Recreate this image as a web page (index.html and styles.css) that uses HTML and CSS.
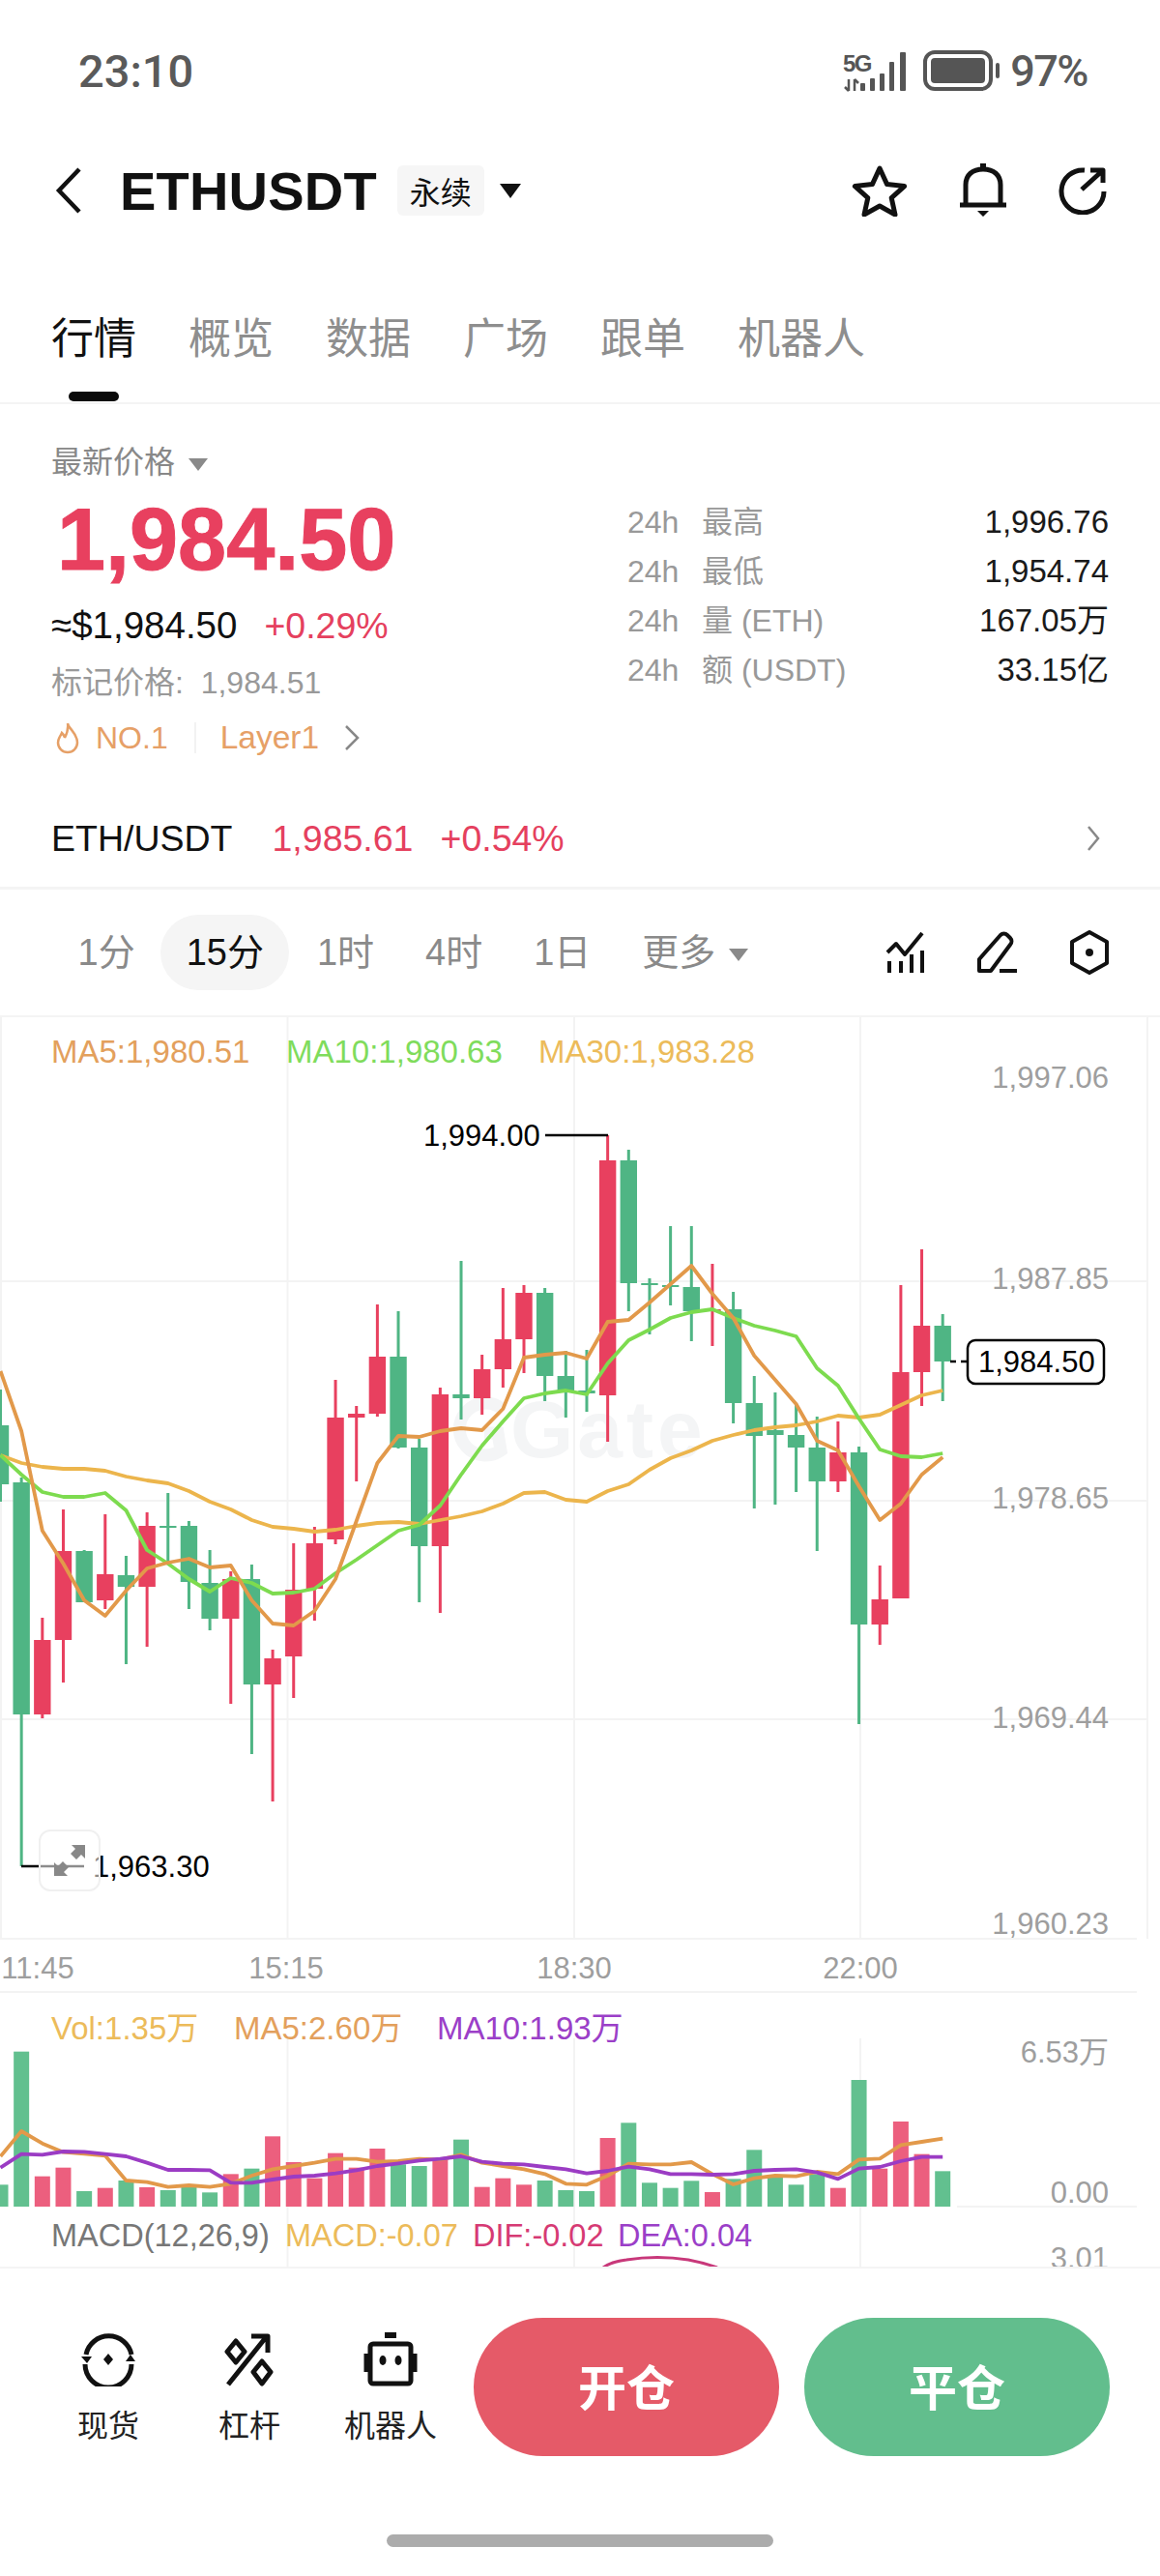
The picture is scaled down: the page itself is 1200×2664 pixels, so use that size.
FILE: index.html
```html
<!DOCTYPE html>
<html lang="zh">

<head>
  <meta charset="utf8">
  <title>ETHUSDT</title>
  <link rel="stylesheet" href="styles.css">
</head>

<body>
  <div class="status">
    <span class="clock">23:10</span>
    <span class="status-right">
      <svg width="166" height="44" viewBox="870 50 166 44">
        <text class="net" x="873" y="73">5G</text>
        <path class="net-arrows" d="M879 81v12M875 89l4 4M885 81v12M885 81l4 4" />
        <rect class="bar" x="891" y="85" width="5" height="8" rx="1" />
        <rect class="bar" x="901" y="80" width="5" height="13" rx="1" />
        <rect class="bar" x="911" y="75" width="5" height="18" rx="1" />
        <rect class="bar" x="921" y="63" width="5" height="30" rx="1" />
        <rect class="bar" x="932" y="53" width="6" height="40" rx="1" />
        <rect class="batt" x="958" y="53" width="68" height="38" rx="10" />
        <rect class="bar" x="964" y="59" width="56" height="26" rx="4" />
        <rect class="bar" x="1031" y="64" width="4" height="16" rx="2" />
      </svg>
      <span class="batt-text">97%</span>
    </span>
  </div>

  <header class="nav">
    <svg class="back" width="30" height="50" viewBox="0 0 30 50">
      <path d="M26 3 5 25l21 22" />
    </svg>
    <span class="symbol">ETHUSDT</span>
    <span class="badge">永续</span>
    <span class="tri tri-dark"></span>
    <span class="nav-icons">
      <svg width="58" height="54" viewBox="0 0 58 54">
        <path class="ico" d="M29 4l7.6 16.6 18 2-13.4 12 3.8 17.4L29 43l-16 9 3.8-17.4-13.4-12 18-2z" />
      </svg>
      <svg width="52" height="56" viewBox="0 0 52 56">
        <path class="ico" d="M8 42V22C8 12 15 6 26 6s18 6 18 16v20" />
        <path class="ico" d="M2 43h48" />
        <path class="ico-fill" d="M20 49h12l-6 6zM23 0h6v6h-6z" />
      </svg>
      <svg width="50" height="50" viewBox="0 0 50 50">
        <path class="ico" d="M27 4A22 22 0 1 0 47 26" />
        <path class="ico" d="M24 24 45 5M33 4h13v13" />
      </svg>
    </span>
  </header>

  <nav class="tabs">
    <div class="tab tab-active">行情<i class="tab-line"></i></div>
    <div class="tab">概览</div>
    <div class="tab">数据</div>
    <div class="tab">广场</div>
    <div class="tab">跟单</div>
    <div class="tab">机器人</div>
  </nav>

  <section class="quote">
    <div class="quote-left">
      <div class="last-label">最新价格<span class="tri tri-gray"></span></div>
      <div class="last-price">1,984.50</div>
      <div class="approx">≈$1,984.50<span class="up">+0.29%</span></div>
      <div class="mark">标记价格:&nbsp; 1,984.51</div>
      <div class="tags">
        <svg width="26" height="34" viewBox="0 0 26 34">
          <path class="flame" d="M13 2c1 6 10 10 10 20a10 10 0 0 1-20 0c0-5 3-7 4-10 2 2 3 3 3 5 2-4 4-9 3-15z" />
        </svg>
        <span class="tag-no">NO.1</span>
        <i class="tag-sep"></i>
        <span class="tag-layer">Layer1</span>
        <svg class="tag-arrow" width="16" height="28" viewBox="0 0 16 28">
          <path d="M2 2l12 12L2 26" />
        </svg>
      </div>
    </div>
    <div class="stats">
      <div class="stat"><span class="h24">24h</span><span class="stat-name">最高</span><span class="stat-val">1,996.76</span></div>
      <div class="stat"><span class="h24">24h</span><span class="stat-name">最低</span><span class="stat-val">1,954.74</span></div>
      <div class="stat"><span class="h24">24h</span><span class="stat-name">量 (ETH)</span><span class="stat-val">167.05万</span></div>
      <div class="stat"><span class="h24">24h</span><span class="stat-name">额 (USDT)</span><span class="stat-val">33.15亿</span></div>
    </div>
  </section>

  <div class="pair">
    <span class="pair-name">ETH/USDT</span>
    <span class="up">1,985.61</span>
    <span class="up">+0.54%</span>
    <svg class="pair-arrow" width="14" height="28" viewBox="0 0 14 28">
      <path d="M2 2l10 12L2 26" />
    </svg>
  </div>

  <div class="periods">
    <span class="period">1分</span>
    <span class="period period-on">15分</span>
    <span class="period">1时</span>
    <span class="period">4时</span>
    <span class="period">1日</span>
    <span class="period">更多<span class="tri tri-gray tri-more"></span></span>
    <span class="tools">
      <svg width="42" height="44" viewBox="0 0 42 44">
        <path class="tool" d="M2 22l9-9 9 11L38 2" />
        <path class="tool" d="M4 43V31M16 43V31M27 43V24M38 43V20" />
      </svg>
      <svg width="44" height="44" viewBox="0 0 44 44">
        <path class="tool" d="M3 41V29L25 4a5 5 0 0 1 7 0l3 3a5 5 0 0 1 0 7L15 41z" />
        <path class="tool" d="M24 41h18" />
      </svg>
      <svg width="42" height="46" viewBox="0 0 42 46">
        <path class="tool" d="M21 2l18 10v22L21 44 3 34V12z" />
        <circle class="tool-dot" cx="21" cy="23" r="4" />
      </svg>
    </span>
  </div>

  <div class="chart">
    <svg class="chart-svg" width="1200" height="1292" viewBox="0 1052 1200 1292">
      <g id="grid"></g>
      <path class="mark-arc" d="M518 1456a27 27 0 1 0 0 44l-3-18h-14" />
      <text class="mark-logo" x="528" y="1507">Gate</text>
      <g id="candles"></g>
      <g id="lines"></g>

      <text class="legend c-ma5" x="53" y="1099">MA5:1,980.51</text>
      <text class="legend c-ma10" x="296" y="1099">MA10:1,980.63</text>
      <text class="legend c-ma30" x="557" y="1099">MA30:1,983.28</text>

      <text class="axis" x="1147" y="1125">1,997.06</text>
      <text class="axis" x="1147" y="1333">1,987.85</text>
      <text class="axis" x="1147" y="1560">1,978.65</text>
      <text class="axis" x="1147" y="1787">1,969.44</text>
      <text class="axis" x="1147" y="2000">1,960.23</text>

      <text class="extreme" x="438" y="1185">1,994.00</text>
      <path class="leader" d="M564 1174h65" />
      <path class="leader" d="M22 1930h65" />
      <text class="extreme" x="96" y="1941">1,963.30</text>

      <rect class="now-box" x="1001" y="1386" width="141" height="45" rx="8" />
      <path class="now-dash" d="M983 1408h17" />
      <text class="extreme" x="1012" y="1419">1,984.50</text>

      <text class="time" x="39" y="2046">11:45</text>
      <text class="time" x="296" y="2046">15:15</text>
      <text class="time" x="594" y="2046">18:30</text>
      <text class="time" x="890" y="2046">22:00</text>

      <text class="legend c-ma30" x="53" y="2109">Vol:1.35万</text>
      <text class="legend c-ma5" x="242" y="2109">MA5:2.60万</text>
      <text class="legend c-ma10v" x="452" y="2109">MA10:1.93万</text>
      <text class="axis" x="1147" y="2133">6.53万</text>
      <text class="axis" x="1147" y="2278">0.00</text>

      <text class="legend legend-macd c-gray" x="53" y="2323">MACD(12,26,9)</text>
      <text class="legend legend-macd c-ma30" x="295" y="2323">MACD:-0.07</text>
      <text class="legend legend-macd c-dif" x="489" y="2323">DIF:-0.02</text>
      <text class="legend legend-macd c-ma10v" x="639" y="2323">DEA:0.04</text>
      <text class="axis" x="1147" y="2346">3.01</text>
      <path class="macd" d="M624 2345q8-6 24-8 32-5 64 0 16 3 30 8" />
    </svg>
    <div class="expand">
      <svg width="34" height="34" viewBox="0 0 34 34">
        <path class="expand-ico" d="M19 1h14v14l-4-4-5 5-6-6 5-5zM1 33V19l4 4 5-5 6 6-5 5 4 4z" />
      </svg>
    </div>
  </div>

  <footer class="bottom">
    <div class="actions">
      <div class="act">
        <svg width="56" height="56" viewBox="0 0 56 56">
          <path class="ico" d="M5 23A24 24 0 0 1 52 23M4 33A24 24 0 0 0 52 33" />
          <path class="ico-fill" d="M0 25h11l-5 7zM46 30h10l-5-7zM28 22l5 6-5 6-5-6z" />
        </svg>
        <span>现货</span>
      </div>
      <div class="act">
        <svg width="56" height="56" viewBox="0 0 56 56">
          <path class="ico" d="M6 54 46 4M30 4h17v17" />
          <path class="ico" d="M14 9l9 11-9 11-9-11zM41 30l9 11-9 12-9-12z" />
        </svg>
        <span>杠杆</span>
      </div>
      <div class="act">
        <svg width="56" height="56" viewBox="0 0 56 56">
          <rect class="ico" x="7" y="12" width="42" height="41" rx="3" />
          <path class="ico" d="M3 22v19M53 22v19" />
          <path class="ico-fill" d="M22 0h12v6H22z" />
          <ellipse class="ico-fill" cx="20" cy="29" rx="3.5" ry="5" />
          <ellipse class="ico-fill" cx="36" cy="29" rx="3.5" ry="5" />
        </svg>
        <span>机器人</span>
      </div>
    </div>
    <button class="trade trade-open">开仓</button>
    <button class="trade trade-close">平仓</button>
  </footer>
  <div class="home-wrap"><i class="home"></i></div>

  <script src="chart.js"></script>
</body>

</html>
```

FILE: styles.css
```css
* {
  box-sizing: border-box;
}

html,
body {
  margin: 0;
  background: #FFF;
}

body {
  width: 1200px;
  height: 2664px;
  overflow: hidden;
  color: #111;
  font-family: "Liberation Sans", "Noto Sans CJK SC", sans-serif;
}

svg {
  display: block;
  flex: none;
}

.status {
  display: flex;
  align-items: center;
  justify-content: space-between;
  height: 146px;
  padding: 0 75px 0 81px;
  color: #5A5A5A;
}

.clock {
  font: 500 47px Roboto, sans-serif;
}

.status-right {
  display: flex;
  align-items: center;
  gap: 10px;
}

.batt-text {
  font: 500 45px Roboto, sans-serif;
  letter-spacing: -1.5px;
}

.net {
  font: 700 24px "Liberation Sans", sans-serif;
  fill: #555;
  letter-spacing: -1.5px;
}

.net-arrows {
  fill: none;
  stroke: #555;
  stroke-width: 2.5;
}

.bar {
  fill: #555;
}

.batt {
  fill: none;
  stroke: #555;
  stroke-width: 4;
}

.nav {
  display: flex;
  align-items: center;
  height: 102px;
  padding: 0 55px 0 56px;
}

.back path {
  fill: none;
  stroke: #111;
  stroke-width: 4.5;
}

.symbol {
  margin-left: 38px;
  font-size: 56px;
  font-weight: 700;
  letter-spacing: .2px;
}

.badge {
  display: flex;
  align-items: center;
  justify-content: center;
  width: 90px;
  height: 52px;
  margin: 0 16px 0 21px;
  border-radius: 6px;
  background: #F6F6F6;
  font-size: 32px;
}

.tri {
  display: inline-block;
  border-style: solid;
  border-color: transparent;
  border-width: 15px 11px 0;
}

.tri-dark {
  border-top-color: #111;
}

.tri-gray {
  margin-left: 14px;
  border-width: 13px 10px 0;
  border-top-color: #8A8A8A;
  vertical-align: middle;
}

.nav-icons {
  display: flex;
  align-items: center;
  gap: 52px;
  margin-left: auto;
}

.ico {
  fill: none;
  stroke: #111;
  stroke-width: 5;
  stroke-linejoin: round;
}

.ico-fill {
  fill: #111;
}

.tabs {
  display: flex;
  gap: 54px;
  height: 170px;
  padding: 77px 0 0 53px;
  border-bottom: 2px solid #F4F4F4;
}

.tab {
  position: relative;
  color: #8E8E8E;
  font-size: 44px;
  line-height: 52px;
}

.tab-active {
  color: #111;
}

.tab-line {
  position: absolute;
  left: 18px;
  top: 80px;
  width: 52px;
  height: 10px;
  border-radius: 5px;
  background: #0A0A0A;
}

.quote {
  display: flex;
  height: 376px;
  padding: 36px 53px 0;
}

.quote-left {
  width: 596px;
}

.last-label {
  height: 48px;
  color: #888;
  font-size: 32px;
  line-height: 48px;
}

.last-price {
  height: 112px;
  margin-left: 6px;
  color: #E8405F;
  font-size: 90px;
  font-weight: 700;
  line-height: 112px;
  -webkit-text-stroke: 1px #E8405F;
}

.approx {
  height: 66px;
  font-size: 38.5px;
  line-height: 66px;
}

.up {
  color: #E5405E;
  font-size: 37.5px;
}

.approx .up {
  margin-left: 28px;
}

.mark {
  height: 52px;
  color: #999;
  font-size: 32px;
  line-height: 52px;
}

.tags {
  display: flex;
  align-items: center;
  height: 62px;
  padding-left: 4px;
  color: #E6A067;
  font-size: 32px;
}

.flame {
  fill: none;
  stroke: #E6A067;
  stroke-width: 2.5;
}

.tag-no {
  margin-left: 16px;
}

.tag-sep {
  width: 2px;
  height: 32px;
  margin: 0 25px 0 27px;
  background: #F2F2F2;
}

.tag-layer {
  font-size: 33.5px;
}

.tag-arrow {
  margin-left: 26px;
}

.tag-arrow path,
.pair-arrow path {
  fill: none;
  stroke: #888;
  stroke-width: 2.5;
}

.stats {
  flex: 1;
  padding-top: 60px;
}

.stat {
  display: flex;
  align-items: baseline;
  height: 51px;
  color: #999;
  font-size: 32px;
  line-height: 51px;
}

.h24 {
  width: 77px;
}

.stat-val {
  margin-left: auto;
  color: #1A1A1A;
  font-size: 33px;
}

.pair {
  display: flex;
  align-items: center;
  gap: 41px;
  height: 126px;
  padding: 23px 62px 0 53px;
  border-bottom: 3px solid #F4F4F4;
  font-size: 37.5px;
}

.pair .up:last-of-type {
  margin-left: -13px;
}

.pair-arrow {
  margin-left: auto;
}

.periods {
  display: flex;
  align-items: center;
  height: 132px;
  padding: 0 52px 0 54px;
  border-bottom: 2px solid #F4F4F4;
  color: #8A8A8A;
  font-size: 38px;
}

.period {
  padding: 0 26.5px;
  line-height: 78px;
}

.period:nth-child(3) {
  margin-left: 2px;
}

.period-on {
  border-radius: 39px;
  background: #F5F5F5;
  color: #111;
}

.tools {
  display: flex;
  align-items: center;
  gap: 52px;
  margin-left: auto;
}

.tool {
  fill: none;
  stroke: #111;
  stroke-width: 4;
  stroke-linejoin: round;
}

.tool-dot {
  fill: #111;
}

.chart {
  position: relative;
  height: 1294px;
  border-bottom: 2px solid #F4F4F4;
}

.chart-svg {
  position: absolute;
  left: 0;
  top: 0;
}

.grid-line {
  stroke: #F3F3F3;
  stroke-width: 2;
}

.mark-logo {
  font-size: 84px;
  font-weight: 700;
  fill: #F4F5F6;
  letter-spacing: 4px;
}

.mark-arc {
  fill: none;
  stroke: #F4F5F6;
  stroke-width: 13;
}

.legend {
  font-size: 33px;
}

.legend-macd {
  font-size: 32.5px;
}

.c-ma5 {
  fill: #E3A05C;
}

.c-ma10 {
  fill: #7FDC5C;
}

.c-ma30 {
  fill: #ECBB5A;
}

.c-ma10v {
  fill: #9B3FC8;
}

.c-gray {
  fill: #777;
}

.c-dif {
  fill: #D63A74;
}

.axis {
  fill: #9E9E9E;
  font-size: 31px;
  text-anchor: end;
}

.time {
  fill: #9E9E9E;
  font-size: 31px;
  text-anchor: middle;
}

.extreme {
  fill: #000;
  font-size: 31px;
}

.leader {
  fill: none;
  stroke: #000;
  stroke-width: 2.5;
}

.now-box {
  fill: #FFF;
  stroke: #000;
  stroke-width: 2.5;
}

.now-dash {
  stroke: #000;
  stroke-width: 2.5;
  stroke-dasharray: 6 5;
}

.macd {
  fill: none;
  stroke: #C8387A;
  stroke-width: 3;
}

.expand {
  position: absolute;
  left: 40px;
  top: 840px;
  display: flex;
  align-items: center;
  justify-content: center;
  width: 64px;
  height: 64px;
  border: 2px solid #F0F0F0;
  border-radius: 12px;
  background: rgba(255, 255, 255, .55);
}

.expand-ico {
  fill: #888;
}

.bottom {
  display: flex;
  gap: 26px;
  height: 194px;
  padding: 51px 52px 0 39px;
}

.actions {
  display: flex;
  flex: none;
  width: 438px;
  margin-right: -13px;
}

.act {
  display: flex;
  flex-direction: column;
  align-items: center;
  gap: 15px;
  width: 146px;
  padding-top: 15px;
  color: #222;
  font-size: 32px;
}

.trade {
  width: 316px;
  height: 143px;
  padding-bottom: 6px;
  border: 0;
  border-radius: 72px;
  color: #FFF;
  font-family: "Noto Sans CJK SC", sans-serif;
  font-size: 50px;
  font-weight: 700;
}

.trade-open {
  background: #E55A68;
}

.trade-close {
  background: #62BE8D;
}

.home-wrap {
  display: flex;
  justify-content: center;
  padding-top: 81px;
}

.home {
  width: 400px;
  height: 13px;
  border-radius: 7px;
  background: #ACACAC;
}
```

FILE: chart.js
```js
const NS = 'http://www.w3.org/2000/svg'
const UP = '#E8405F'
const DOWN = '#4FB584'

// [rising, high, bodyTop, bodyBottom, low]
const candles = [
  [0, 1437, 1474, 1535, 1553], [0, 1528, 1533, 1773, 1930], [1, 1673, 1696, 1773, 1777], [1, 1561, 1604, 1696, 1740],
  [0, 1603, 1604, 1657, 1657], [1, 1566, 1628, 1655, 1664], [0, 1609, 1629, 1641, 1721], [1, 1564, 1578, 1641, 1703],
  [0, 1544, 1578, 1580, 1615], [0, 1573, 1578, 1636, 1664], [0, 1603, 1637, 1674, 1686], [1, 1625, 1633, 1674, 1762],
  [0, 1618, 1633, 1742, 1814], [1, 1706, 1715, 1742, 1863], [1, 1596, 1644, 1713, 1756], [1, 1579, 1596, 1643, 1676],
  [1, 1427, 1466, 1592, 1597], [1, 1454, 1462, 1466, 1532], [1, 1349, 1403, 1462, 1465], [0, 1356, 1403, 1497, 1498],
  [0, 1488, 1497, 1599, 1657], [1, 1435, 1442, 1599, 1668], [0, 1304, 1442, 1446, 1468], [1, 1401, 1416, 1446, 1463],
  [1, 1332, 1385, 1416, 1435], [1, 1329, 1337, 1385, 1420], [0, 1332, 1337, 1423, 1449], [0, 1397, 1423, 1440, 1466],
  [0, 1396, 1438, 1441, 1460], [1, 1174, 1200, 1443, 1491], [0, 1189, 1200, 1327, 1356], [0, 1322, 1327, 1329, 1380],
  [0, 1268, 1329, 1331, 1350], [0, 1268, 1331, 1356, 1387], [1, 1307, 1354, 1356, 1392], [0, 1336, 1354, 1451, 1472],
  [0, 1423, 1451, 1485, 1560], [0, 1440, 1479, 1484, 1556], [0, 1451, 1484, 1497, 1543], [0, 1465, 1497, 1532, 1604],
  [1, 1470, 1502, 1532, 1543], [0, 1496, 1502, 1680, 1783], [1, 1619, 1654, 1680, 1701], [1, 1329, 1419, 1653, 1653],
  [1, 1292, 1371, 1419, 1454], [0, 1359, 1371, 1408, 1449],
]

const ma5 = [1418, 1480, 1583, 1617, 1655, 1671, 1645, 1622, 1616, 1612, 1621, 1619, 1655, 1679, 1681, 1666, 1633, 1573, 1513, 1485, 1486, 1480, 1477, 1479, 1457, 1404, 1401, 1399, 1405, 1367, 1365, 1347, 1328, 1309, 1338, 1363, 1402, 1427, 1452, 1490, 1500, 1537, 1572, 1555, 1525, 1507]
const ma10 = [1505, 1525, 1543, 1548, 1548, 1544, 1562, 1603, 1617, 1633, 1646, 1632, 1637, 1648, 1647, 1643, 1627, 1613, 1598, 1583, 1577, 1557, 1525, 1495, 1470, 1446, 1441, 1438, 1442, 1410, 1386, 1375, 1363, 1357, 1354, 1363, 1371, 1376, 1382, 1415, 1433, 1467, 1499, 1506, 1507, 1503]
const ma30 = [1505, 1513, 1517, 1519, 1519, 1521, 1527, 1531, 1534, 1542, 1553, 1561, 1572, 1579, 1581, 1584, 1582, 1578, 1575, 1574, 1576, 1572, 1568, 1563, 1555, 1544, 1543, 1551, 1553, 1542, 1535, 1520, 1508, 1500, 1490, 1484, 1479, 1476, 1474, 1470, 1464, 1466, 1463, 1453, 1443, 1438]

// volume values are read as y offsets from the divider at 2060, x3
const vol = [598, 185, 572, 545, 618, 608, 585, 606, 615, 600, 622, 565, 548, 448, 528, 578, 500, 545, 486, 535, 540, 520, 458, 605, 578, 598, 585, 615, 618, 453, 406, 592, 608, 586, 621, 580, 490, 575, 598, 565, 608, 273, 548, 402, 503, 556]
const volMa5 = [510, 432, 470, 497, 502, 508, 585, 590, 605, 600, 605, 595, 570, 550, 540, 530, 518, 518, 527, 525, 518, 520, 505, 530, 540, 550, 565, 595, 598, 570, 533, 535, 535, 528, 565, 597, 578, 570, 572, 558, 565, 520, 517, 475, 465, 455]
const volMa10 = [545, 503, 505, 495, 496, 503, 510, 530, 552, 552, 553, 592, 592, 582, 573, 570, 563, 553, 540, 532, 523, 518, 510, 527, 533, 535, 543, 550, 563, 555, 542, 550, 565, 565, 567, 565, 555, 552, 550, 560, 580, 548, 543, 525, 512, 512]

const xAt = i => 0.5 + 21.66 * i
const volY = v => 2060 + v / 3

function add(parent, tag, attrs) {
  const el = document.createElementNS(NS, tag)
  for (const k in attrs) el.setAttribute(k, attrs[k])
  parent.appendChild(el)
  return el
}

function drawGrid() {
  const g = document.querySelector('#grid')
  for (const y of [1325, 1552, 1778]) add(g, 'line', { class: 'grid-line', x1: 0, x2: 1187, y1: y, y2: y })
  for (const y of [2005, 2060]) add(g, 'line', { class: 'grid-line', x1: 0, x2: 1176, y1: y, y2: y })
  add(g, 'line', { class: 'grid-line', x1: 990, x2: 1176, y1: 2282, y2: 2282 })
  for (const x of [1, 297.5, 594, 890, 1187]) add(g, 'line', { class: 'grid-line', x1: x, x2: x, y1: 1052, y2: 2005 })
  for (const x of [297.5, 594, 890]) add(g, 'line', { class: 'grid-line', x1: x, x2: x, y1: 2108, y2: 2345 })
}

function drawCandles() {
  const g = document.querySelector('#candles')
  candles.forEach(([rising, high, top, bottom, low], i) => {
    const x = xAt(i)
    const fill = rising ? UP : DOWN
    add(g, 'rect', { x: x - 1.5, y: high, width: 3, height: low - high, fill })
    add(g, 'rect', { x: x - 8.7, y: top, width: 17.4, height: bottom - top, fill })
  })
  vol.forEach((v, i) => {
    const x = xAt(i)
    const fill = candles[i][0] ? '#EC5F7E' : '#62C08F'
    add(g, 'rect', { x: x - 8, y: volY(v), width: 16, height: 2282 - volY(v), fill })
  })
}

function polyline(g, xs, ys, stroke) {
  add(g, 'polyline', {
    points: ys.map((y, i) => xs(i) + ',' + y).join(' '),
    fill: 'none',
    stroke,
    'stroke-width': 3.8,
    'stroke-linejoin': 'round',
  })
}

function drawLines() {
  const g = document.querySelector('#lines')
  polyline(g, xAt, ma30, '#ECB54C')
  polyline(g, xAt, ma10, '#7DDB4F')
  polyline(g, xAt, ma5, '#E2994A')
  polyline(g, xAt, volMa5.map(volY), '#E2994A')
  polyline(g, xAt, volMa10.map(volY), '#9B3CC4')
}

drawGrid()
drawCandles()
drawLines()
```
